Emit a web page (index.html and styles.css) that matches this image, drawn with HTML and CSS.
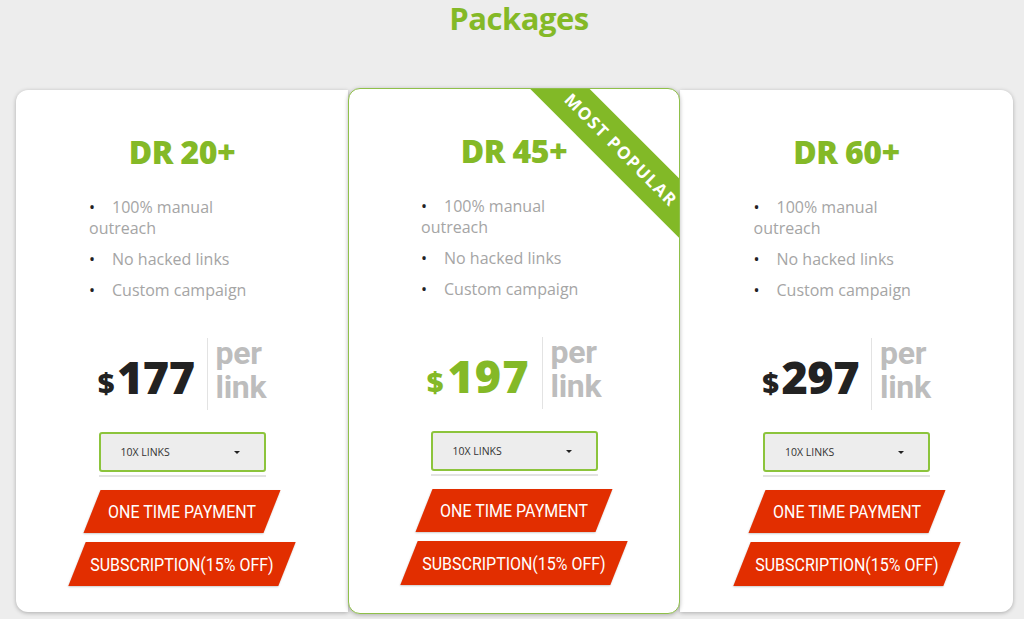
FILE: index.html
```html
<!DOCTYPE html>
<html lang="en">
<head>
<meta charset="utf-8">
<title>Packages</title>
<link rel="stylesheet" href="styles.css">
</head>
<body>
<h1 class="page-title">Packages</h1>
<div class="cards">
  <div class="card card-left">
    <h2 class="plan">DR 20+</h2>
    <ul class="features">
      <li>100% manual outreach</li>
      <li>No hacked links</li>
      <li>Custom campaign</li>
    </ul>
    <div class="price-row">
      <div class="amount"><span class="dollar">$</span>177</div>
      <div class="divider"></div>
      <div class="per">per<br>link</div>
    </div>
    <div class="select-wrap">
      <div class="select"><span>10X LINKS</span><span class="caret"></span></div>
    </div>
    <a class="btn btn-one"><span>ONE TIME PAYMENT</span></a>
    <a class="btn btn-sub"><span>SUBSCRIPTION(15% OFF)</span></a>
  </div>
  <div class="card card-mid">
    <div class="ribbon">MOST POPULAR</div>
    <h2 class="plan">DR 45+</h2>
    <ul class="features">
      <li>100% manual outreach</li>
      <li>No hacked links</li>
      <li>Custom campaign</li>
    </ul>
    <div class="price-row">
      <div class="amount amount-green"><span class="dollar">$</span>197</div>
      <div class="divider"></div>
      <div class="per">per<br>link</div>
    </div>
    <div class="select-wrap">
      <div class="select"><span>10X LINKS</span><span class="caret"></span></div>
    </div>
    <a class="btn btn-one"><span>ONE TIME PAYMENT</span></a>
    <a class="btn btn-sub"><span>SUBSCRIPTION(15% OFF)</span></a>
  </div>
  <div class="card card-right">
    <h2 class="plan">DR 60+</h2>
    <ul class="features">
      <li>100% manual outreach</li>
      <li>No hacked links</li>
      <li>Custom campaign</li>
    </ul>
    <div class="price-row">
      <div class="amount"><span class="dollar">$</span>297</div>
      <div class="divider"></div>
      <div class="per">per<br>link</div>
    </div>
    <div class="select-wrap">
      <div class="select"><span>10X LINKS</span><span class="caret"></span></div>
    </div>
    <a class="btn btn-one"><span>ONE TIME PAYMENT</span></a>
    <a class="btn btn-sub"><span>SUBSCRIPTION(15% OFF)</span></a>
  </div>
</div>
</body>
</html>
```

FILE: styles.css
```css
html, body {
  margin: 0;
  padding: 0;
}
body {
  background: #ededed;
  width: 1024px;
  height: 619px;
  overflow: hidden;
  font-family: "Open Sans", "Noto Sans", sans-serif;
}
.page-title {
  margin: 0 0 52px;
  padding: 0 0 0 14px;
  text-align: center;
  font-size: 31px;
  line-height: 36px;
  font-weight: 700;
  letter-spacing: -0.5px;
  color: #84b927;
}
.cards {
  display: flex;
  align-items: center;
  padding-left: 16px;
}
.card {
  box-sizing: border-box;
  width: 332px;
  height: 522px;
  background: #fff;
  display: flex;
  flex-direction: column;
  align-items: center;
  padding-top: 42px;
  box-shadow: 0 1px 4px rgba(0, 0, 0, 0.28);
}
.card-left {
  border-radius: 12px 0 0 12px;
}
.card-right {
  width: 333px;
  border-radius: 0 12px 12px 0;
}
.card-mid {
  position: relative;
  z-index: 1;
  height: 526px;
  border: 1px solid #8fc04a;
  border-radius: 12px;
  overflow: hidden;
}
.ribbon {
  position: absolute;
  left: 142px;
  top: 40px;
  width: 260px;
  height: 42px;
  line-height: 42px;
  background: #82b927;
  color: #fff;
  text-align: center;
  font-size: 17px;
  font-weight: 700;
  letter-spacing: 1.5px;
  transform: rotate(45deg);
}
.plan {
  margin: 0;
  font-size: 32px;
  line-height: 40px;
  font-weight: 800;
  color: #84b927;
  letter-spacing: -0.5px;
}
.features {
  list-style: none;
  margin: 25px 0 0;
  padding: 0;
  width: 186px;
  font-size: 16px;
  line-height: 21px;
  color: #a5a5a5;
}
.features li + li {
  margin-top: 10px;
}
.features li::before {
  content: "\2022";
  display: inline-block;
  width: 23px;
  color: #222;
}
.price-row {
  margin-top: 37px;
  height: 72px;
  display: flex;
}
.amount {
  align-self: flex-end;
  font-size: 45px;
  line-height: 55px;
  font-weight: 800;
  color: #222;
  letter-spacing: -0.5px;
  white-space: nowrap;
}
.amount-green {
  color: #84b927;
  letter-spacing: 1px;
}
.dollar {
  font-size: 29px;
  margin-right: 3px;
}
.divider {
  width: 1px;
  background: #e3e3e3;
  margin: 0 8px 0 12px;
}
.per {
  font-family: Roboto, "Open Sans", sans-serif;
  font-size: 32px;
  line-height: 34px;
  font-weight: 700;
  color: #bdbdbd;
  letter-spacing: -0.3px;
  margin-top: -2px;
}
.select-wrap {
  margin-top: 22px;
  width: 167px;
  padding-bottom: 3px;
  border-bottom: 2px solid #e2e2e2;
}
.select {
  box-sizing: border-box;
  height: 40px;
  border: 2px solid #8cc43c;
  border-radius: 3px;
  background: #ededed;
  display: flex;
  align-items: center;
  justify-content: space-between;
  padding: 0 24px 0 20px;
  font-size: 10.5px;
  color: #333;
}
.caret {
  width: 0;
  height: 0;
  border-left: 3px solid transparent;
  border-right: 3px solid transparent;
  border-top: 3px solid #222;
}
.btn {
  display: flex;
  align-items: center;
  justify-content: center;
  background: #e22e00;
  color: #fff;
  transform: skewX(-21.6deg);
  box-shadow: 0 1px 2px rgba(0, 0, 0, 0.2);
  font-family: Roboto, "Open Sans", sans-serif;
  font-size: 19px;
  white-space: nowrap;
}
.btn span {
  transform: skewX(21.6deg) scaleX(0.84);
}
.btn-one {
  margin-top: 13px;
  width: 180px;
  height: 43px;
}
.btn-sub {
  margin-top: 9px;
  width: 210px;
  height: 44px;
}
```
